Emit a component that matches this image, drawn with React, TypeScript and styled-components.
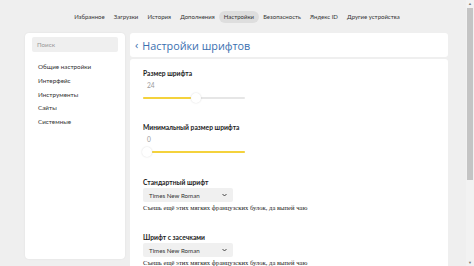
import styled, { createGlobalStyle } from 'styled-components';

const GlobalStyle = createGlobalStyle`
	html, body {
		margin: 0;
		padding: 0;
		background: #efefef;
		overflow: hidden;
	}
	body {
		font-family: Lato, 'Open Sans', sans-serif;
		color: #222;
	}
`;

const Page = styled.div`
	display: flex;
	width: 474px;
	height: 266px;
	overflow: hidden;
`;

const Content = styled.div`
	flex: 1;
	display: flex;
	flex-direction: column;
`;

const Nav = styled.nav`
	height: 33px;
	flex-shrink: 0;
	display: flex;
	align-items: center;
	justify-content: center;
	padding-left: 8px;
	box-sizing: border-box;
`;

const NavItem = styled.span<{ $active?: boolean }>`
	font-size: 6px;
	color: #333;
	padding: 2.5px 4.6px;
	border-radius: 7px;
	background: ${(p) => (p.$active ? '#dedede' : 'transparent')};
	white-space: nowrap;
`;

const Body = styled.div`
	display: flex;
	gap: 5px;
	padding-left: 25px;
	padding-right: 18px;
`;

const Sidebar = styled.aside`
	width: 100px;
	height: 226px;
	flex-shrink: 0;
	background: #fff;
	border-radius: 4px;
	box-shadow: 0 0 2px rgba(0, 0, 0, 0.08);
	padding: 4px 7px;
	box-sizing: border-box;
`;

const Search = styled.div`
	height: 15px;
	background: #efefef;
	border-radius: 2px;
	font-size: 6.3px;
	color: #999;
	display: flex;
	align-items: center;
	padding-left: 5px;
	margin-bottom: 8px;
`;

const SideItem = styled.div`
	font-size: 6.3px;
	color: #333;
	height: 13.8px;
	line-height: 13.8px;
	padding-left: 6px;
`;

const Main = styled.main`
	flex: 1;
	display: flex;
	flex-direction: column;
	gap: 2px;
`;

const HeaderCard = styled.div`
	height: 24px;
	flex-shrink: 0;
	background: #fff;
	border-radius: 3px;
	display: flex;
	align-items: center;
	padding-left: 5px;
	font-family: 'Open Sans', sans-serif;
	font-size: 10.8px;
	color: #3a6fb0;
`;

const Back = styled.span`
	font-size: 11px;
	margin-right: 4px;
	margin-top: -1px;
`;

const Card = styled.div`
	height: 220px;
	background: #fff;
	border-radius: 3px 3px 0 0;
	padding: 8px 13px;
	box-sizing: border-box;
`;

const Section = styled.div<{ $gap: number }>`
	margin-bottom: ${(p) => p.$gap}px;
`;

const Label = styled.div`
	font-size: 6.7px;
	font-weight: 700;
	color: #222;
	height: 12px;
	line-height: 12px;
`;

const Value = styled.div`
	font-size: 6.6px;
	color: #999;
	padding-left: 4px;
	height: 13px;
	line-height: 13px;
`;

const Track = styled.div`
	position: relative;
	width: 102px;
	height: 2px;
	margin-top: 5px;
	background: #e6e6e6;
	border-radius: 1px;
`;

const Fill = styled.div`
	position: absolute;
	top: 0;
	bottom: 0;
	background: #f4d23c;
	border-radius: 1px;
`;

const Thumb = styled.div`
	position: absolute;
	top: -4px;
	width: 10px;
	height: 10px;
	margin-left: -5px;
	border-radius: 50%;
	background: #fff;
	box-shadow: 0 0 2px rgba(0, 0, 0, 0.15);
`;

const Select = styled.div`
	width: 90px;
	height: 14px;
	background: #f0f0f0;
	border-radius: 2px;
	display: flex;
	align-items: center;
	justify-content: space-between;
	padding: 0 6px 0 6px;
	box-sizing: border-box;
	font-size: 6.2px;
	color: #333;
`;

const Sample = styled.div`
	font-family: 'Liberation Serif', 'DejaVu Serif', serif;
	font-size: 6.6px;
	color: #222;
	white-space: nowrap;
	height: 11px;
	line-height: 12px;
`;

const Scrollbar = styled.div`
	width: 8px;
	background: #f2f2f2;
	display: flex;
	flex-direction: column;
	align-items: center;
`;

const Arrow = styled.div`
	font-size: 4px;
	color: #777;
	height: 7px;
	line-height: 7px;
`;

const ScrollThumb = styled.div`
	width: 6px;
	height: 172px;
	background: #c4c4c4;
	margin-top: 1px;
`;

const ScrollGap = styled.div`
	flex: 1;
`;

const Slider = ({ from, to, thumb }: { from: number; to: number; thumb: number }) => (
	<Track>
		<Fill style={{ left: `${from}px`, width: `${to - from}px` }} />
		<Thumb style={{ left: `${thumb}px` }} />
	</Track>
);

const FontSelect = () => (
	<Select>
		<span>Times New Roman</span>
		<svg width="5" height="4" viewBox="0 0 5 4">
			<path d="M0.5 1 L2.5 3 L4.5 1" fill="none" stroke="#333" strokeWidth="0.9" />
		</svg>
	</Select>
);

const navItems = [
	'Избранное',
	'Загрузки',
	'История',
	'Дополнения',
	'Настройки',
	'Безопасность',
	'Яндекс ID',
	'Другие устройства',
];

const sideItems = ['Общие настройки', 'Интерфейс', 'Инструменты', 'Сайты', 'Системные'];

const sample = 'Съешь ещё этих мягких французских булок, да выпей чаю';

export default function App() {
	return (
		<>
			<GlobalStyle />
			<Page>
				<Content>
					<Nav>
						{navItems.map((item) => (
							<NavItem key={item} $active={item === 'Настройки'}>
								{item}
							</NavItem>
						))}
					</Nav>
					<Body>
						<Sidebar>
							<Search>Поиск</Search>
							{sideItems.map((item) => (
								<SideItem key={item}>{item}</SideItem>
							))}
						</Sidebar>
						<Main>
							<HeaderCard>
								<Back>‹</Back>Настройки шрифтов
							</HeaderCard>
							<Card>
								<Section $gap={22}>
									<Label>Размер шрифта</Label>
									<Value>24</Value>
									<Slider from={0} to={48} thumb={53} />
								</Section>
								<Section $gap={23}>
									<Label>Минимальный размер шрифта</Label>
									<Value>0</Value>
									<Slider from={9} to={102} thumb={4} />
								</Section>
								<Section $gap={18}>
									<Label>Стандартный шрифт</Label>
									<FontSelect />
									<Sample>{sample}</Sample>
								</Section>
								<Section $gap={0}>
									<Label>Шрифт с засечками</Label>
									<FontSelect />
									<Sample>{sample}</Sample>
								</Section>
							</Card>
						</Main>
					</Body>
				</Content>
				<Scrollbar>
					<Arrow>▲</Arrow>
					<ScrollThumb />
					<ScrollGap />
					<Arrow>▼</Arrow>
				</Scrollbar>
			</Page>
		</>
	);
}
